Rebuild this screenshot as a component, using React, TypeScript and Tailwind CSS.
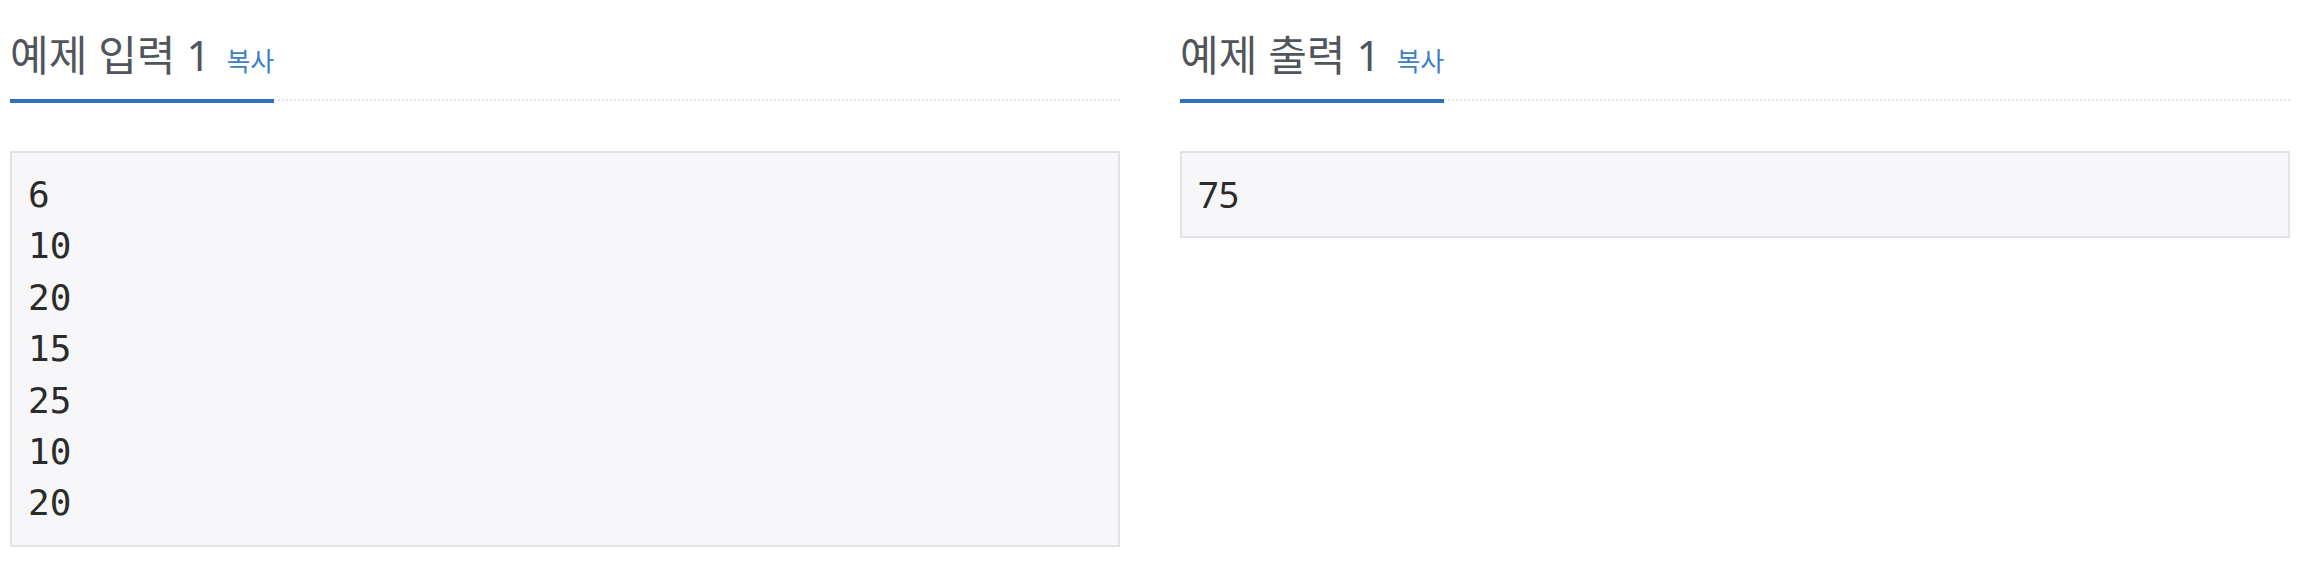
const sans = "font-['Noto_Sans','Noto_Sans_CJK_KR',sans-serif]";

type SampleProps = {
  title: string;
  lines: string[];
  mono?: boolean;
};

const Sample = ({ title, lines, mono }: SampleProps) => {
  return (
    <section className="flex-1 min-w-0">
      <div className="border-b-2 border-dotted border-[#dfe3ea] mb-[50px]">
        <h2
          className={`inline-flex items-baseline pt-[33px] pb-[22px] mb-[-4px] border-b-4 border-[#3071b9] text-[42px] leading-[44px] font-normal text-[#50545b] ${sans}`}
        >
          {title}
          <button className="ml-[16px] text-[26px] leading-[26px] text-[#3f80c5] cursor-pointer">
            복사
          </button>
        </h2>
      </div>
      <pre
        className={`m-0 p-4 border-2 border-[#e1e1e8] bg-[#f7f7f9] text-[36px] leading-[51.4px] text-[#2b2b2b] ${
          mono ? "font-['DejaVu_Sans_Mono',monospace]" : sans
        }`}
      >
        {lines.join("\n")}
      </pre>
    </section>
  );
};

export default function App() {
  return (
    <div className="w-[2300px] h-[570px] bg-white flex gap-[60px] px-[10px]">
      <Sample title="예제 입력 1" lines={["6", "10", "20", "15", "25", "10", "20"]} mono />
      <Sample title="예제 출력 1" lines={["75"]} />
    </div>
  );
}
